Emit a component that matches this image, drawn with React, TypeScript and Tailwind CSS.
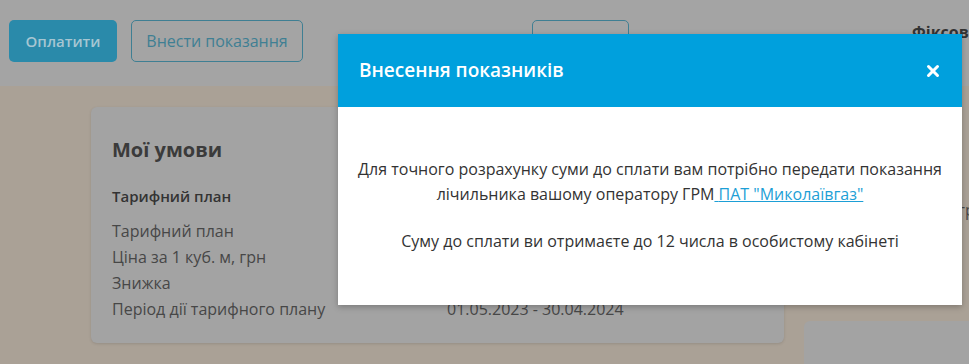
import { X } from "lucide-react";

const rows = [
  ["Тарифний план", ""],
  ["Ціна за 1 куб. м, грн", ""],
  ["Знижка", ""],
  ["Період дії тарифного плану", "01.05.2023 - 30.04.2024"],
];

export default function App() {
  return (
    <div
      className="relative h-[364px] w-[969px] overflow-hidden bg-[#aaa196] text-[#3a3a3a]"
      style={{ fontFamily: '"Open Sans", "Noto Sans", sans-serif' }}
    >
      {/* page under the dimmed backdrop */}
      <header className="flex h-[86px] items-start bg-[#a4a4a4] pl-[9px] pt-[20px]">
        <button className="h-[42px] w-[108px] rounded-[5px] bg-[#2a8aaa] text-[15px] font-semibold text-[#a6c6d2]">
          Оплатити
        </button>
        <button className="ml-[14px] h-[42px] w-[172px] rounded-[5px] border border-[#3f7f93] text-[16px] font-medium text-[#3f7f93]">
          Внести показання
        </button>
        <div className="ml-[229px] h-[42px] w-[97px] rounded-[5px] border border-[#3f7f93]" />
        <div className="ml-[283px] pt-[2px]">
          <p className="text-[16px] font-bold leading-5 text-[#333]">Фіксов</p>
          <p className="mt-[12px] text-[12px] leading-4 text-[#666]">ф</p>
        </div>
      </header>

      <main className="flex gap-[20px] pl-[91px] pt-[21px]">
        <section className="h-[236px] w-[693px] shrink-0 rounded-[6px] bg-[#a3a3a3] px-[21px] pt-[29px] shadow-[0_1px_3px_rgba(0,0,0,0.12)]">
          <h2 className="text-[20px] font-bold leading-7 text-[#3b3b3b]">Мої умови</h2>
          <h3 className="mt-[22px] text-[15px] font-semibold leading-5 text-[#333]">Тарифний план</h3>
          <div className="mt-[15px] flex flex-col gap-[6px]">
            {rows.map(([label, value]) => (
              <div key={label} className="flex text-[16px] leading-5 text-[#474747]">
                <span className="w-[335px]">{label}</span>
                <span>{value}</span>
              </div>
            ))}
          </div>
        </section>
        <div className="flex flex-col">
          <p className="pl-[154px] pt-[93px] text-[16px] leading-5 text-[#474747]">гр</p>
          <section className="mt-[101px] h-[60px] w-[200px] rounded-[6px] bg-[#a3a3a3] pl-[20px] pt-[38px] text-[21px] font-bold leading-7 text-[#333]">
            О
          </section>
        </div>
      </main>

      {/* modal */}
      <div className="absolute left-[338px] top-[34px] w-[624px] bg-white shadow-[0_2px_6px_rgba(0,0,0,0.25)]">
        <div className="flex h-[73px] items-center justify-between bg-[#00a0dd] pl-[21px] pr-[20px]">
          <h1 className="text-[19px] font-semibold text-white">Внесення показників</h1>
          <X className="h-[18px] w-[18px] text-white" strokeWidth={4} />
        </div>
        <div className="flex h-[198px] flex-col items-center px-[10px] pt-[50px] text-center text-[16px] leading-[25px] text-[#333]">
          <p>
            Для точного розрахунку суми до сплати вам потрібно передати показання
            <br />
            лічильника вашому оператору ГРМ
            <a href="#" className="text-[#1d9fd6] underline">
              {" "}ПАТ "Миколаївгаз"
            </a>
          </p>
          <p className="mt-[22px]">Суму до сплати ви отримаєте до 12 числа в особистому кабінеті</p>
        </div>
      </div>
    </div>
  );
}
